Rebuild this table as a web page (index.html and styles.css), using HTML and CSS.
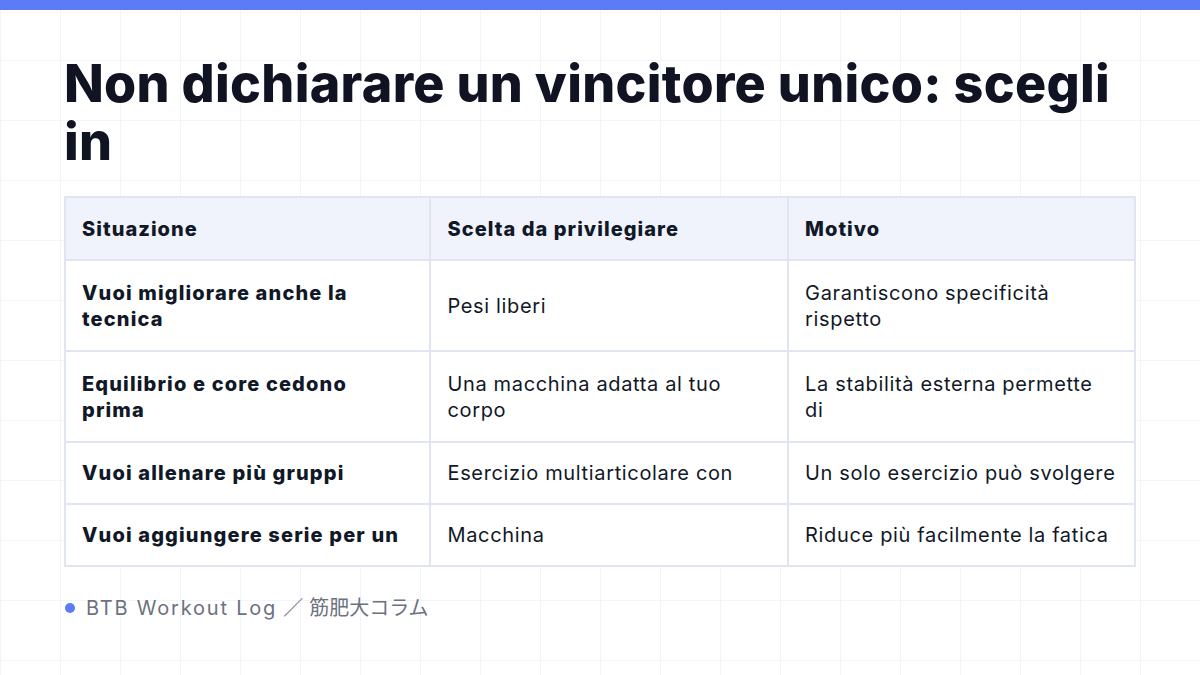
FILE: index.html
```html
<!DOCTYPE html>
<html lang="it">
<head>
    <meta charset="UTF-8">
    <title>Non dichiarare un vincitore unico</title>
    <link rel="stylesheet" href="styles.css">
</head>
<body>
    <div class="topbar"></div>
    <div class="slide">
        <h1>Non dichiarare un vincitore unico: scegli in</h1>

        <table class="compare">
            <colgroup>
                <col class="c1">
                <col class="c2">
                <col class="c3">
            </colgroup>
            <thead>
                <tr>
                    <th>Situazione</th>
                    <th>Scelta da privilegiare</th>
                    <th>Motivo</th>
                </tr>
            </thead>
            <tbody>
                <tr class="tall">
                    <td class="lead">Vuoi migliorare anche la<br>tecnica</td>
                    <td>Pesi liberi</td>
                    <td>Garantiscono specificità<br>rispetto</td>
                </tr>
                <tr class="tall">
                    <td class="lead">Equilibrio e core cedono<br>prima</td>
                    <td>Una macchina adatta al tuo<br>corpo</td>
                    <td>La stabilità esterna permette<br>di</td>
                </tr>
                <tr>
                    <td class="lead">Vuoi allenare più gruppi</td>
                    <td>Esercizio multiarticolare con</td>
                    <td>Un solo esercizio può svolgere</td>
                </tr>
                <tr>
                    <td class="lead">Vuoi aggiungere serie per un</td>
                    <td>Macchina</td>
                    <td>Riduce più facilmente la fatica</td>
                </tr>
            </tbody>
        </table>

        <div class="footer">
            <span class="dot"></span>
            <span class="brand">BTB Workout Log</span>
            <span class="sep">／</span>
            <span class="jp">筋肥大コラム</span>
        </div>
    </div>
</body>
</html>
```

FILE: styles.css
```css
html, body {
    margin: 0;
    padding: 0;
}
body {
    width: 1200px;
    height: 675px;
    overflow: hidden;
    font-family: Inter, "Noto Sans CJK JP", sans-serif;
    color: #111827;
    background-color: #ffffff;
    background-image:
        linear-gradient(to right, #f3f4f7 1px, transparent 1px),
        linear-gradient(to bottom, #f3f4f7 1px, transparent 1px);
    background-size: 60px 60px;
}
.topbar {
    height: 10px;
    background: #5b7cf6;
}
.slide {
    padding: 45px 64px 0 64px;
}
h1 {
    margin: 0;
    font-size: 52px;
    line-height: 58px;
    font-weight: 800;
    letter-spacing: 0.3px;
    color: #0f1322;
    width: 1072px;
}
.compare {
    margin-top: 25px;
    width: 1072px;
    border-collapse: collapse;
    font-size: 20px;
    line-height: 26px;
    letter-spacing: 0.65px;
    background: #ffffff;
}
.c1 { width: 366px; }
.c2 { width: 359px; }
.c3 { width: 347px; }
.compare th,
.compare td {
    border: 2px solid #e1e5f1;
    padding: 17px 16px;
    text-align: left;
    vertical-align: middle;
    white-space: nowrap;
}
.compare th {
    background: #f1f3fc;
    font-weight: 800;
    letter-spacing: 1.05px;
    padding: 18px 16px 17px;
}
.compare td.lead {
    font-weight: 800;
    letter-spacing: 1.15px;
}
.compare tr.tall td {
    padding: 18.5px 16px;
}
.footer {
    margin-top: 28px;
    display: flex;
    align-items: center;
    font-size: 20px;
    line-height: 26px;
    color: #6b7280;
}
.dot {
    width: 10px;
    height: 10px;
    border-radius: 50%;
    background: #5b7cf6;
    margin: 0 11px 0 1px;
}
.brand {
    letter-spacing: 1.8px;
}
.sep {
    margin: 0 6px 0 6px;
}
```
